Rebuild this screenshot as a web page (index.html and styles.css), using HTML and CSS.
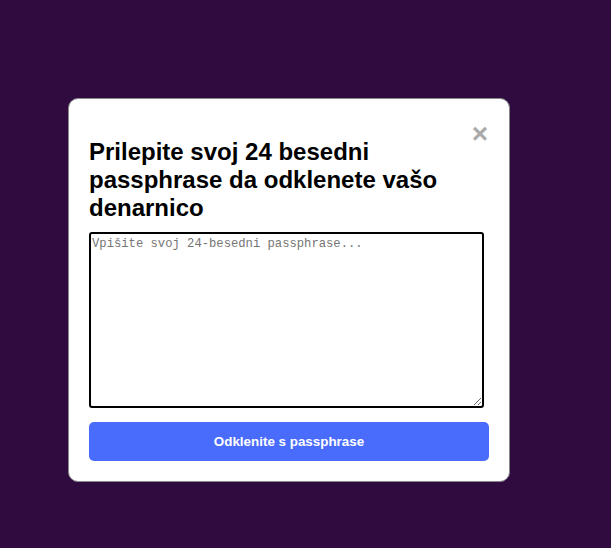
FILE: index.html
```html
<!DOCTYPE html>
<html lang="sl">
<head>
<meta charset="utf-8">
<title>Odklenite denarnico</title>
<link rel="stylesheet" href="styles.css">
</head>
<body>
<div class="page">
  <div class="modal">
    <span class="close">&times;</span>
    <h2 class="title">Prilepite svoj 24 besedni passphrase da odklenete vašo denarnico</h2>
    <textarea class="phrase" placeholder="Vpišite svoj 24-besedni passphrase..."></textarea>
    <button class="unlock">Odklenite s passphrase</button>
  </div>
</div>
</body>
</html>
```
FILE: styles.css
```css
html, body {
  margin: 0;
  padding: 0;
  height: 100%;
}
body {
  background: #300b3f;
  font-family: "Liberation Sans", Arial, sans-serif;
}
.page {
  padding: 98px 0 0 68px;
}
.modal {
  position: relative;
  box-sizing: border-box;
  width: 442px;
  background: #fff;
  border: 1px solid #888;
  border-radius: 10px;
  padding: 20px;
  display: flex;
  flex-direction: column;
  align-items: flex-start;
}
.close {
  position: absolute;
  top: 21px;
  right: 21px;
  color: #aaa;
  font-size: 28px;
  font-weight: bold;
  line-height: 28px;
}
.title {
  margin: 19px 0 10px;
  font-size: 24px;
  font-weight: bold;
  line-height: 28px;
  color: #000;
}
.phrase {
  box-sizing: border-box;
  width: 395px;
  height: 176px;
  margin: 0 0 14px;
  padding: 3px 1px;
  border: 2px solid #000;
  border-radius: 3px;
  font-family: "Liberation Mono", monospace;
  font-size: 12.2px;
  resize: vertical;
}
.phrase::placeholder {
  color: #757575;
}
.unlock {
  width: 400px;
  height: 39px;
  border: none;
  border-radius: 5px;
  background: #4a6cfd;
  color: #fff;
  font-family: "Liberation Sans", Arial, sans-serif;
  font-size: 13.4px;
  font-weight: bold;
}
```
